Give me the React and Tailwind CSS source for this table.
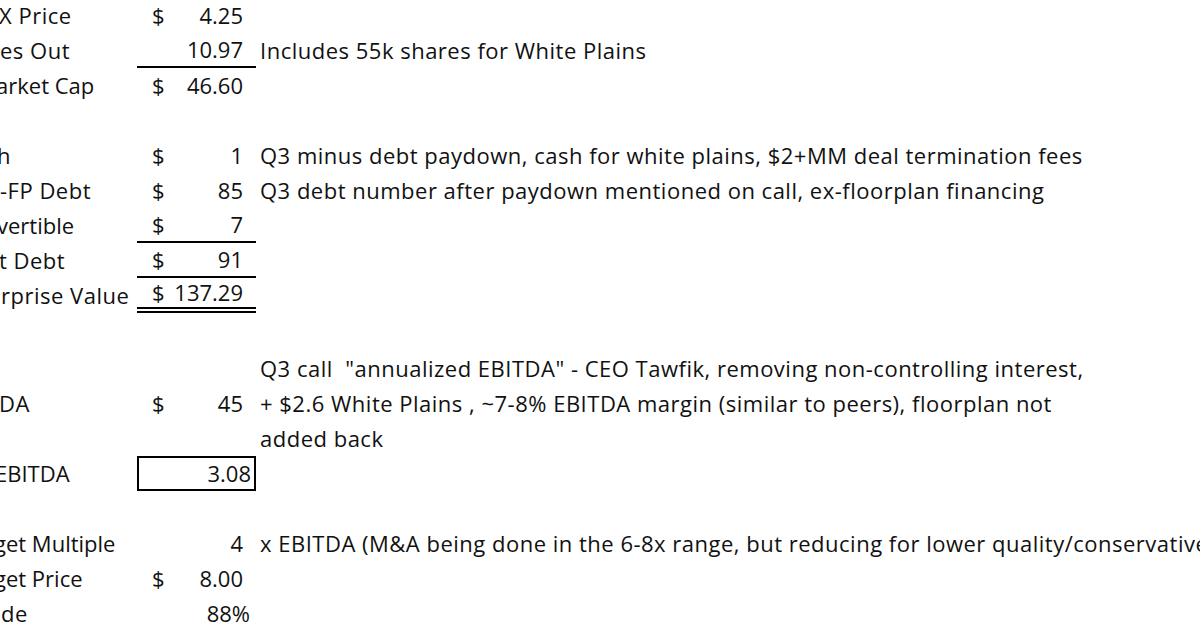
import React from "react";

const rows = [
  { label: "X Price", lx: -1, dollar: true, value: "4.25", note: "" },
  { label: "es Out", lx: 0, dollar: false, value: "10.97", note: "Includes 55k shares for White Plains", border: "single" },
  { label: "arket Cap", lx: -4, ls: "tracking-[0px]", dollar: true, value: "46.60", note: "" },
  { empty: true },
  { label: "h", lx: -3, dollar: true, value: "1", note: "Q3 minus debt paydown, cash for white plains, $2+MM deal termination fees" },
  { label: "-FP Debt", lx: 0, dollar: true, value: "85", note: "Q3 debt number after paydown mentioned on call, ex-floorplan financing" },
  { label: "vertible", lx: -3, ls: "tracking-[0px]", dollar: true, value: "7", note: "", border: "single" },
  { label: "t Debt", lx: -1, dollar: true, value: "91", note: "", border: "single" },
  { label: "rprise Value", lx: 1, dollar: true, value: "137.29", note: "", border: "double" },
  { empty: true, tall: true },
  { label: "", dollar: false, value: "", note: "Q3 call  \"annualized EBITDA\" - CEO Tawfik, removing non-controlling interest," },
  { label: "DA", lx: -1, dollar: true, value: "45", note: "+ $2.6 White Plains , ~7-8% EBITDA margin (similar to peers), floorplan not" },
  { label: "", dollar: false, value: "", note: "added back" },
  { label: "EBITDA", lx: -5, ls: "tracking-[0px]", dollar: false, value: "3.08", note: "", box: true, plain: true },
  { empty: true },
  { label: "get Multiple", lx: -6, ls: "tracking-[0px]", dollar: false, value: "4", note: "x EBITDA (M&A being done in the 6-8x range, but reducing for lower quality/conservative)" },
  { label: "get Price", lx: -6, ls: "tracking-[0px]", dollar: true, value: "8.00", note: "" },
  { label: "de", lx: 1, dollar: false, value: "88%", note: "", plain: true },
];

function ValueCell({ r }) {
  let cls = "relative flex items-center justify-between h-full pb-[2px] tracking-[0px]";
  if (r.border === "single") cls += " border-b-2 border-black";
  if (r.border === "double") cls += " border-b-[6px] border-double border-black";
  if (r.box) cls += " border-2 border-black";
  return (
    <div className={cls}>
      <span className="pl-[15px]">{r.dollar ? "$" : ""}</span>
      <span className={r.plain ? (r.box ? "pr-[3px]" : "pr-[6px]") : "pr-[13px]"}>{r.value}</span>
    </div>
  );
}

export default function App() {
  return (
    <div
      className="w-[1200px] h-[630px] overflow-hidden bg-white text-[#111]"
      style={{ fontFamily: '"Open Sans", "Noto Sans", sans-serif' }}
    >
      <div className="-mt-[2px] flex flex-col text-[22px] tracking-[0.5px] leading-none whitespace-nowrap">
        {rows.map((r, i) =>
          r.empty ? (
            <div key={i} className={r.tall ? "h-[38px]" : "h-[35px]"} />
          ) : (
            <div key={i} className="grid grid-cols-[137px_119px_1fr] h-[35px]">
              <div className="flex items-center overflow-hidden pb-[2px]">
                <span className={r.ls || ""} style={{ marginLeft: r.lx }}>{r.label}</span>
              </div>
              <ValueCell r={r} />
              <div className="flex items-center pl-[4px] pb-[2px] whitespace-pre">{r.note}</div>
            </div>
          )
        )}
      </div>
    </div>
  );
}
